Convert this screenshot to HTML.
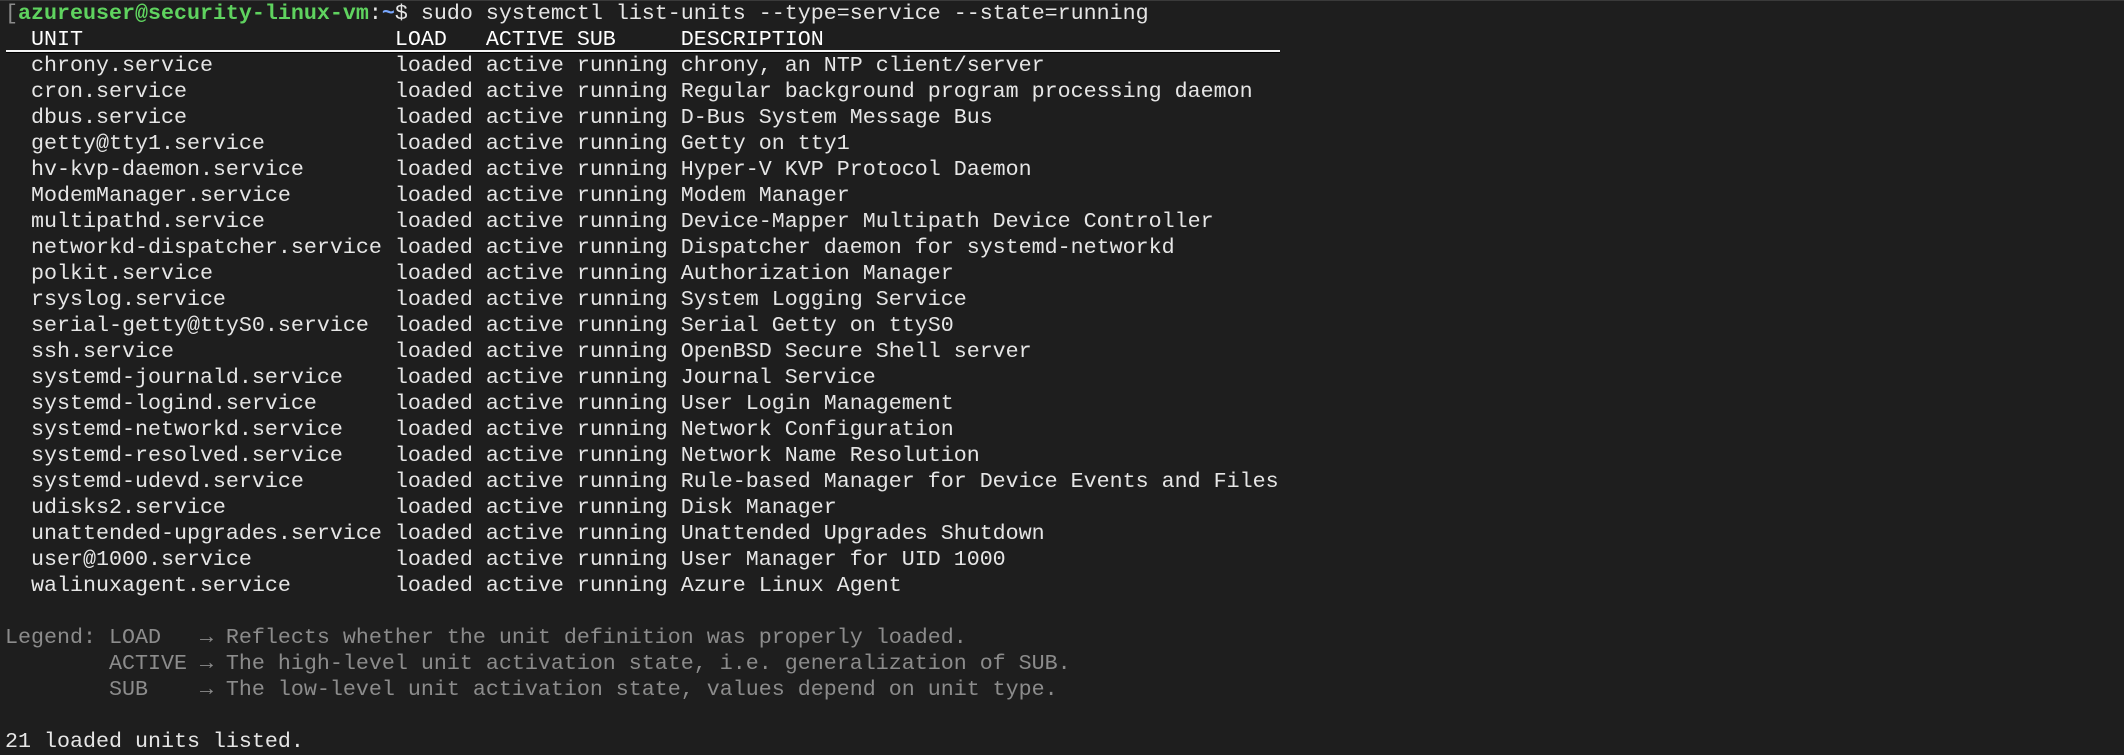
<!DOCTYPE html>
<html><head><meta charset="utf-8"><style>
html,body{margin:0;padding:0;background:#1e1e1e;width:2124px;height:742px;overflow:hidden}
pre{position:absolute;left:5px;top:1px;margin:0;font-family:"Liberation Mono","DejaVu Sans Mono",monospace;font-size:21.67px;line-height:26px;color:#e6e6e6;white-space:pre}
.g{color:#5fd35f;font-weight:bold}
.b{color:#7aa8ff;font-weight:bold}
.h{color:#ffffff}
.l{color:#8c8c8c}
.ul{position:absolute;left:6px;top:50px;width:1274px;height:2px;background:#f4f4f4;border-bottom:1px solid #000}
.top{position:absolute;left:0;top:0;width:2124px;height:1px;background:#3a3a3a}
</style></head><body>
<div class="top"></div>
<div class="ul"></div>
<pre><span class="l">[</span><span class="g">azureuser@security-linux-vm</span>:<span class="b">~</span>$ sudo systemctl list-units --type=service --state=running
<span class="h">  UNIT                        LOAD   ACTIVE SUB     DESCRIPTION</span>
  chrony.service              loaded active running chrony, an NTP client/server
  cron.service                loaded active running Regular background program processing daemon
  dbus.service                loaded active running D-Bus System Message Bus
  getty@tty1.service          loaded active running Getty on tty1
  hv-kvp-daemon.service       loaded active running Hyper-V KVP Protocol Daemon
  ModemManager.service        loaded active running Modem Manager
  multipathd.service          loaded active running Device-Mapper Multipath Device Controller
  networkd-dispatcher.service loaded active running Dispatcher daemon for systemd-networkd
  polkit.service              loaded active running Authorization Manager
  rsyslog.service             loaded active running System Logging Service
  serial-getty@ttyS0.service  loaded active running Serial Getty on ttyS0
  ssh.service                 loaded active running OpenBSD Secure Shell server
  systemd-journald.service    loaded active running Journal Service
  systemd-logind.service      loaded active running User Login Management
  systemd-networkd.service    loaded active running Network Configuration
  systemd-resolved.service    loaded active running Network Name Resolution
  systemd-udevd.service       loaded active running Rule-based Manager for Device Events and Files
  udisks2.service             loaded active running Disk Manager
  unattended-upgrades.service loaded active running Unattended Upgrades Shutdown
  user@1000.service           loaded active running User Manager for UID 1000
  walinuxagent.service        loaded active running Azure Linux Agent

<span class="l">Legend: LOAD   → Reflects whether the unit definition was properly loaded.
        ACTIVE → The high-level unit activation state, i.e. generalization of SUB.
        SUB    → The low-level unit activation state, values depend on unit type.</span>

21 loaded units listed.
</pre>
</body></html>
